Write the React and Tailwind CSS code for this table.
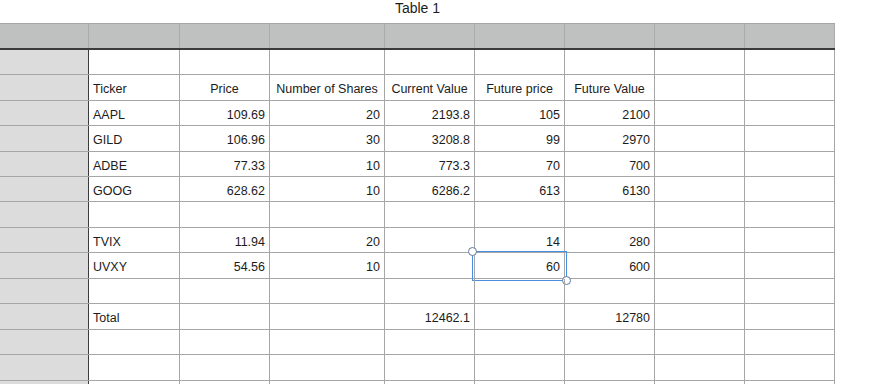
const widths = [89, 91, 90, 115, 90, 90, 90, 90, 90]
const heights = [25, 26, 25, 26, 25, 25, 26, 25, 26, 25, 26, 25, 26, 25]

const rows = [
  [],
  [
    { t: "Ticker", a: "left" },
    { t: "Price", a: "center" },
    { t: "Number of Shares", a: "center" },
    { t: "Current Value", a: "center" },
    { t: "Future price", a: "center" },
    { t: "Future Value", a: "center" },
  ],
  ["AAPL", "109.69", "20", "2193.8", "105", "2100"],
  ["GILD", "106.96", "30", "3208.8", "99", "2970"],
  ["ADBE", "77.33", "10", "773.3", "70", "700"],
  ["GOOG", "628.62", "10", "6286.2", "613", "6130"],
  [],
  ["TVIX", "11.94", "20", "", "14", "280"],
  ["UVXY", "54.56", "10", "", "60", "600"],
  [],
  ["Total", "", "", "12462.1", "", "12780"],
  [],
  [],
  [],
]

function Cell({ value, col, selected }) {
  let text = value
  let align = col === 1 ? "left" : "right"
  if (value && typeof value === "object") {
    text = value.t
    align = value.a
  }
  const justify =
    align === "left" ? "justify-start pl-[4px]" : align === "center" ? "justify-center" : "justify-end pr-[4px]"
  return (
    <div
      className={`relative flex items-center pt-[4px] border-r border-[#a6a6a6] ${justify}`}
      style={{ width: widths[col] }}
    >
      {text}
      {selected && (
        <div className="absolute -left-[3px] -top-[2px] -right-[3px] -bottom-[3px] border border-[#4a8ee0] pointer-events-none">
          <span className="absolute -left-[5px] -top-[5px] w-[9px] h-[9px] rounded-full bg-white border border-[#5d789e]"></span>
          <span className="absolute -right-[5px] -bottom-[5px] w-[9px] h-[9px] rounded-full bg-white border border-[#5d789e]"></span>
        </div>
      )}
    </div>
  )
}

export default function App() {
  return (
    <div
      className="w-[883px] h-[384px] overflow-hidden bg-white text-[12.5px] text-[#1c1c1c]"
      style={{ fontFamily: '"Liberation Sans", Arial, sans-serif' }}
    >
      <div className="w-[835px] h-[23px] text-center text-[14px] leading-[16px]">Table 1</div>

      <div className="w-[835px]">
        {/* header row */}
        <div className="flex h-[27px] bg-[#bfc1c0] border-t border-[#a6a6a6] border-b-2 border-b-[#3b3b3b]">
          {widths.map((w, i) => (
            <div key={i} className="border-r border-[#a9abaa]" style={{ width: w }}></div>
          ))}
        </div>

        {rows.map((row, r) => (
          <div key={r} className="flex border-b border-[#a6a6a6]" style={{ height: heights[r] }}>
            <div className="w-[89px] bg-[#dcdcdc] border-r border-r-[#3b3b3b]"></div>
            {widths.slice(1).map((w, c) => (
              <Cell key={c} value={row[c]} col={c + 1} selected={r === 8 && c === 4} />
            ))}
          </div>
        ))}
      </div>
    </div>
  )
}
